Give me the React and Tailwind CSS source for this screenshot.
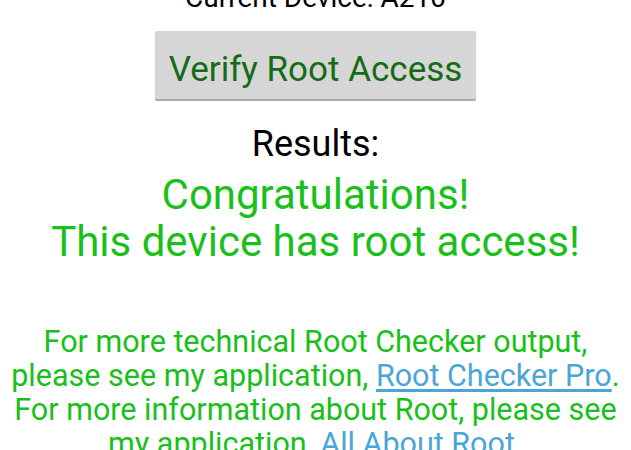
export default function App() {
  return (
    <div className="h-[450px] w-[631px] overflow-hidden bg-white flex flex-col items-center font-['Roboto',sans-serif] text-center whitespace-nowrap">
      <div className="shrink-0 mt-[-20px] text-[28px] leading-[36px] text-black">Current Device: A210</div>
      <button className="shrink-0 mt-[15px] w-[321px] h-[68px] pt-[9px] bg-[#d6d6d6] rounded-[2px] shadow-[0_2px_1px_rgba(0,0,0,0.35)] text-[#156b15] text-[35px] leading-none">
        Verify Root Access
      </button>
      <div className="shrink-0 mt-[25px] text-[36px] leading-[40px] text-black">Results:</div>
      <div className="shrink-0 mt-[7px] text-[42px] leading-[47px] text-[#19c019]">
        <div>Congratulations!</div>
        <div>This device has root access!</div>
      </div>
      <p className="shrink-0 mt-[60px] text-[30.5px] leading-[34px] text-[#19c019]">
        For more technical Root Checker output,
        <br />
        please see my application,{" "}
        <span className="text-[#4aa6d6] underline underline-offset-[3px]">Root Checker Pro</span>.
        <br />
        For more information about Root, please see
        <br />
        my application, <span className="text-[#4aa6d6] underline underline-offset-[3px]">All About Root</span>.
      </p>
    </div>
  );
}
